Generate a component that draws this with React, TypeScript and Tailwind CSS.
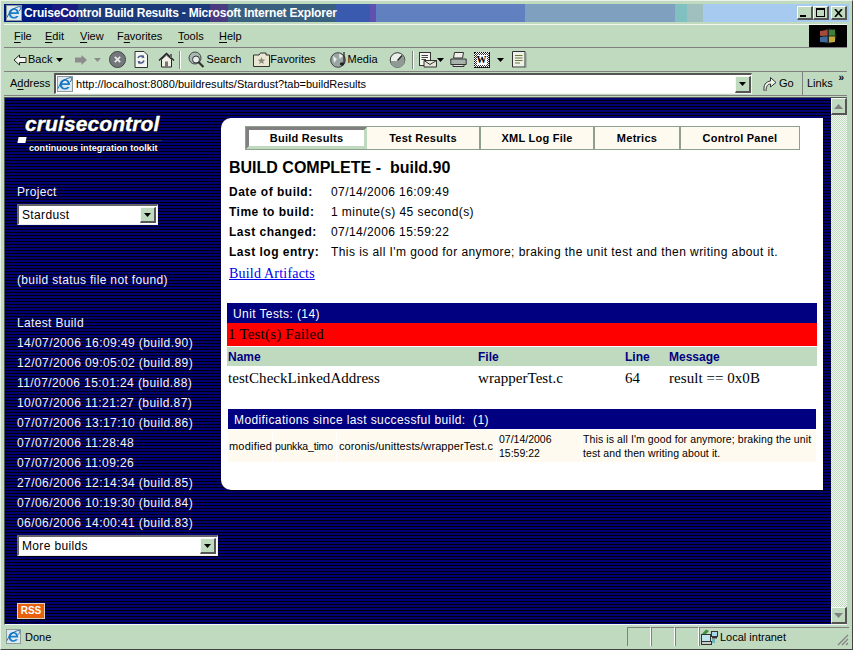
import React from "react";

const ui = "font-['Liberation_Sans',sans-serif]";

function IeLogo({ size = 16 }: { size?: number }) {
  return (
    <svg width={size} height={size} viewBox="0 0 16 16" className="shrink-0">
      <rect x="0.5" y="0.5" width="15" height="15" fill="#dfe9ef" stroke="#8a9a9a" />
      <path d="M2.5 9 H13 C13.2 5.5 11 3.2 8 3.2 C5 3.2 2.7 5.5 2.7 8.5 C2.7 11.5 5 13.6 8 13.6 C10 13.6 11.6 12.7 12.6 11 H10.2 C9.6 11.7 8.9 12 8 12 C6.4 12 5.2 10.7 5 9 Z M5.1 7.2 C5.4 5.8 6.5 4.8 8 4.8 C9.4 4.8 10.4 5.8 10.7 7.2 Z" fill="#1a7fc8" fillRule="evenodd" />
      <path d="M1 12.5 C4 5 10 1.5 14.5 1.6 C15.5 3 14 5 13 6" fill="none" stroke="#0f5d9c" strokeWidth="0.9" />
    </svg>
  );
}

function Arrow({ dir, color }: { dir: "left" | "right"; color: string }) {
  return (
    <svg width="14" height="12" viewBox="0 0 14 12" className="shrink-0">
      {dir === "left" ? (
        <path d="M1 6 L6.5 1 V3.5 H13 V8.5 H6.5 V11 Z" fill="#f4f6f0" stroke={color} />
      ) : (
        <path d="M13 6 L7.5 1 V3.5 H1 V8.5 H7.5 V11 Z" fill={color} />
      )}
    </svg>
  );
}

function Caret({ color = "#000" }: { color?: string }) {
  return (
    <svg width="7" height="4" viewBox="0 0 7 4" className="shrink-0">
      <path d="M0 0 H7 L3.5 4 Z" fill={color} />
    </svg>
  );
}

function Stop() {
  return (
    <svg width="17" height="17" viewBox="0 0 17 17" className="shrink-0">
      <circle cx="8.5" cy="8.5" r="8" fill="#74787c" stroke="#444" />
      <path d="M5.8 5.8 L11.2 11.2 M11.2 5.8 L5.8 11.2" stroke="#e8e8e8" strokeWidth="1.8" />
    </svg>
  );
}

function Refresh() {
  return (
    <svg width="14" height="17" viewBox="0 0 14 17" className="shrink-0">
      <path d="M1 .5 H10 L13.5 4 V16.5 H1 Z" fill="#f4f6f0" stroke="#333" />
      <path d="M4 7 C5 4.5 8 4.5 9.5 6 M10 9.5 C9 12.5 6 12.5 4.5 11" fill="none" stroke="#4b5b8a" strokeWidth="1.5" />
      <path d="M9 3.5 L10.5 7 L7.5 6.8 Z M5 13.5 L3.5 10 L6.5 10.2 Z" fill="#4b5b8a" />
    </svg>
  );
}

function Home() {
  return (
    <svg width="17" height="16" viewBox="0 0 17 16" className="shrink-0">
      <path d="M1 8.5 L8.5 1.5 L16 8.5" fill="none" stroke="#222" strokeWidth="1.4" />
      <path d="M3.5 7.5 V15 H13.5 V7.5 L8.5 3 Z" fill="#f2f0e6" stroke="#222" />
      <rect x="7" y="9.5" width="3" height="5.5" fill="#777" />
      <rect x="12" y="2" width="2" height="4" fill="#666" />
    </svg>
  );
}

function SearchIcon() {
  return (
    <svg width="17" height="17" viewBox="0 0 17 17" className="shrink-0">
      <circle cx="7" cy="7" r="6" fill="#a9b8b2" stroke="#444" />
      <circle cx="8" cy="8.5" r="3.5" fill="#e7efec" stroke="#333" />
      <path d="M10.5 11 L15.5 16" stroke="#333" strokeWidth="2.2" />
    </svg>
  );
}

function FavFolder() {
  return (
    <svg width="17" height="15" viewBox="0 0 17 15" className="shrink-0">
      <path d="M.5 3 H6 L7.5 1 H13 V3 H16.5 V14.5 H.5 Z" fill="#e9e6d2" stroke="#333" />
      <path d="M8.5 5 L9.5 7.6 L12.3 7.7 L10.1 9.4 L10.9 12 L8.5 10.5 L6.1 12 L6.9 9.4 L4.7 7.7 L7.5 7.6 Z" fill="#8a8a7a" />
    </svg>
  );
}

function MediaIcon() {
  return (
    <svg width="17" height="18" viewBox="0 0 17 18" className="shrink-0">
      <circle cx="8" cy="9" r="7.3" fill="#9aa6a2" stroke="#444" />
      <path d="M3 5 L7 8 L4 12 Z M9 2.5 L13 5 L9.5 8 Z" fill="#e8eeea" />
      <path d="M14 1 V12.5" stroke="#222" strokeWidth="1.2" />
      <ellipse cx="12" cy="13" rx="2.2" ry="1.7" fill="#222" />
    </svg>
  );
}

function History() {
  return (
    <svg width="17" height="16" viewBox="0 0 17 16" className="shrink-0">
      <circle cx="8.5" cy="8" r="7.3" fill="#e9efe9" stroke="#333" />
      <path d="M1.5 9 H8.5 L13 3.5 A7.3 7.3 0 0 1 15 12 A7.3 7.3 0 0 1 1.5 9 Z" fill="#8f9a94" />
      <path d="M8.5 8.5 L13 3.5" stroke="#222" strokeWidth="1.3" />
    </svg>
  );
}

function MailIcon() {
  return (
    <svg width="19" height="16" viewBox="0 0 19 16" className="shrink-0">
      <rect x="0.5" y="0.5" width="11" height="13" fill="#f4f6f0" stroke="#333" />
      <path d="M2.5 3.5 H9 M2.5 5.5 H9 M2.5 7.5 H7" stroke="#444" />
      <path d="M5 8.5 H17.5 V15 H5 Z" fill="#e6e6d8" stroke="#333" />
      <path d="M5 8.5 L11 12.5 L17.5 8.5" fill="none" stroke="#333" />
    </svg>
  );
}

function Printer() {
  return (
    <svg width="17" height="15" viewBox="0 0 17 15" className="shrink-0">
      <path d="M4.5 .5 H13.5 L12.5 6 H3.5 Z" fill="#f1f1ea" stroke="#333" />
      <path d="M.8 7 H16.2 V12.5 H.8 Z" fill="#a9b3ae" stroke="#333" />
      <path d="M3 12.5 H14 V14.5 H3 Z" fill="#ddd" stroke="#333" />
    </svg>
  );
}

function WordIcon() {
  return (
    <span className="flex h-[16px] w-[16px] shrink-0 items-center justify-center border border-dotted border-black bg-[repeating-conic-gradient(#333_0_25%,#fff_0_50%)] bg-[length:2px_2px]">
      <span className="flex h-[10px] w-[10px] items-center justify-center bg-white font-['Liberation_Serif',serif] text-[10px] leading-none font-bold text-black">W</span>
    </span>
  );
}

function Note() {
  return (
    <svg width="15" height="17" viewBox="0 0 15 17" className="shrink-0">
      <path d="M.5 .5 H13 V16 H.5 Z" fill="#eef1e8" stroke="#333" />
      <path d="M14 2 V16.7 H2" fill="none" stroke="#8a9a8a" />
      <path d="M3 4.5 H10.5 M3 7 H10.5 M3 9.5 H10.5 M3 12 H8" stroke="#6a7a3a" />
    </svg>
  );
}

function GoIcon() {
  return (
    <svg width="14" height="16" viewBox="0 0 14 16" className="shrink-0">
      <path d="M1.2 15 C0 9 3 5.5 7.5 5 V1.5 L13 6.5 L7.5 11 V8 C5 8 3 10 3 15" fill="#eef1e8" stroke="#333" />
    </svg>
  );
}

function IntranetIcon() {
  return (
    <svg width="17" height="16" viewBox="0 0 17 16" className="shrink-0">
      <path d="M1 5 L5 0.5 L8 2 L4 6 Z" fill="#3f8f3f" />
      <rect x="0.5" y="5.5" width="9" height="7" fill="#bfe6ef" stroke="#333" />
      <rect x="0.5" y="12.5" width="10" height="3" fill="#c8ccc8" stroke="#333" />
      <rect x="10.5" y="2.5" width="6" height="5" fill="#a8d8e8" stroke="#333" />
      <rect x="11" y="8" width="5" height="1.5" fill="#333" />
      <path d="M11 11 H14 M11 13 H14" stroke="#1c8fb0" />
    </svg>
  );
}

function WinFlag() {
  return (
    <svg width="18" height="16" viewBox="0 0 18 16">
      <circle cx="10" cy="8" r="7.5" fill="#202a20" />
      <path d="M1 3 L8.5 2 V7.5 L1 8 Z" fill="#a64a3c" />
      <path d="M10 2 L16 1.5 V7.5 L10 7.5 Z" fill="#3f7f3c" />
      <path d="M1 9 L8.5 8.5 V14.5 L1 14 Z" fill="#41689a" />
      <path d="M10 8.5 L16 8.5 V14 L10 14.5 Z" fill="#c8a93c" />
    </svg>
  );
}

function ScrollBtn({ up }: { up?: boolean }) {
  return (
    <div className="flex h-[17px] w-[16px] shrink-0 items-center justify-center border-t border-r-2 border-b-2 border-l border-t-[#f4f8f4] border-r-[#555] border-b-[#555] border-l-[#f4f8f4] bg-[#c0dac0]">
      <svg width="9" height="5" viewBox="0 0 9 5">
        <path d={up ? "M0 5 H9 L4.5 0 Z" : "M0 0 H9 L4.5 5 Z"} fill="#808080" />
      </svg>
    </div>
  );
}

function Select({ label, className }: { label: string; className: string }) {
  return (
    <div className={`${className} flex h-[21px] items-center border-t-2 border-r border-b border-l-2 border-t-[#666] border-r-[#e8f0e8] border-b-[#e8f0e8] border-l-[#666] bg-white pl-[3px] text-[12px] tracking-[0.35px] text-black`}>
      <span className="flex-1">{label}</span>
      <span className="mr-px flex h-[16px] w-[16px] items-center justify-center border-t border-r-2 border-b-2 border-l border-t-[#f4f8f4] border-r-[#555] border-b-[#555] border-l-[#f4f8f4] bg-[#c0dac0]">
        <Caret />
      </span>
    </div>
  );
}

function Tab({ label, w, active }: { label: string; w: string; active?: boolean }) {
  return (
    <div
      className={
        active
          ? `${w} flex items-center justify-center border-t-[3px] border-r-[3px] border-b-[3px] border-l-[3px] border-t-[#808080] border-r-[#c0dac0] border-b-[#c0dac0] border-l-[#808080] bg-white`
          : `${w} flex items-center justify-center border-r-2 border-r-[#8fa08f] bg-[#fffaf0]`
      }
    >
      {label}
    </div>
  );
}

const builds = [
  "14/07/2006 16:09:49 (build.90)",
  "12/07/2006 09:05:02 (build.89)",
  "11/07/2006 15:01:24 (build.88)",
  "10/07/2006 11:21:27 (build.87)",
  "07/07/2006 13:17:10 (build.86)",
  "07/07/2006 11:28:48",
  "07/07/2006 11:09:26",
  "27/06/2006 12:14:34 (build.85)",
  "07/06/2006 10:19:30 (build.84)",
  "06/06/2006 14:00:41 (build.83)",
];

const info = [
  ["Date of build:", "07/14/2006 16:09:49"],
  ["Time to build:", "1 minute(s) 45 second(s)"],
  ["Last changed:", "07/14/2006 15:59:22"],
  ["Last log entry:", "This is all I'm good for anymore; braking the unit test and then writing about it."],
];

function U({ k, rest, pre = "" }: { k: string; rest: string; pre?: string }) {
  return (
    <span>
      {pre}
      <span className="underline underline-offset-2">{k}</span>
      {rest}
    </span>
  );
}

export default function App() {
  return (
    <div className={`${ui} flex h-[650px] w-[853px] flex-col overflow-hidden border-t border-r border-b border-l border-t-[#e8f2e8] border-r-[#444] border-b-[#444] border-l-[#e8f2e8] bg-[#c0dac0] pt-[3px] pr-[3px] pb-[3px] pl-[3px] text-black`}>
      {/* Title bar */}
      <div className="flex h-[18px] shrink-0 items-center bg-[linear-gradient(90deg,#001a80_0,#001a80_48px,#1a1a80_48px,#1a1a80_74px,#1a3a7a_74px,#1a3a7a_206px,#4a3a80_206px,#4a3a80_224px,#3a6080_224px,#3a6080_331px,#3a5ab0_331px,#3a5ab0_366px,#6050b0_366px,#6050b0_372px,#6080c0_372px,#6080c0_521px,#80a0c0_521px,#80a0c0_671px,#80c0c0_671px,#80c0c0_683px,#a0c0c0_683px,#a0c0c0_699px,#a6caf0_699px)] pr-[2px] pl-[2px]">
        <IeLogo size={16} />
        <span className="ml-[2px] flex-1 text-[12px] font-bold tracking-[-0.2px] whitespace-nowrap text-white">CruiseControl Build Results - Microsoft Internet Explorer</span>
        {["min", "max", "close"].map((k) => (
          <span key={k} className={`${k === "close" ? "ml-[2px]" : ""} flex h-[14px] w-[16px] items-center justify-center border-t border-r-2 border-b-2 border-l border-t-white border-r-[#555] border-b-[#555] border-l-white bg-[#c0dac0]`}>
            {k === "min" && <span className="mt-[7px] mr-[3px] h-[2px] w-[6px] bg-black" />}
            {k === "max" && <span className="h-[9px] w-[9px] border border-t-2 border-black" />}
            {k === "close" && (
              <svg width="9" height="8" viewBox="0 0 9 8">
                <path d="M1 0 L8 8 M8 0 L1 8" stroke="#000" strokeWidth="1.6" />
              </svg>
            )}
          </span>
        ))}
      </div>

      {/* Menu */}
      <div className="mt-[2px] mr-[2px] flex h-[24px] shrink-0 items-stretch border-t border-b border-t-[#f0f6f0] border-b-[#808080] text-[11px]">
        <div className="flex flex-1 items-center pl-[10px]">
          <span className="w-[31px]"><U k="F" rest="ile" /></span>
          <span className="w-[35px]"><U k="E" rest="dit" /></span>
          <span className="w-[37px]"><U k="V" rest="iew" /></span>
          <span className="w-[61px]"><U pre="F" k="a" rest="vorites" /></span>
          <span className="w-[41px]"><U k="T" rest="ools" /></span>
          <span><U k="H" rest="elp" /></span>
        </div>
        <div className="flex w-[38px] items-center justify-center bg-black">
          <WinFlag />
        </div>
      </div>

      {/* Toolbar */}
      <div className="mr-[2px] flex h-[24px] shrink-0 items-center border-b border-b-[#808080] pl-[9px] text-[11px] [&>span]:flex">
        <Arrow dir="left" color="#222" />
        <span className="ml-[1px]">Back</span>
        <span className="ml-[4px]"><Caret /></span>
        <span className="ml-[11px]"><Arrow dir="right" color="#8c8c8c" /></span>
        <span className="ml-[6px]"><Caret color="#8c8c8c" /></span>
        <span className="ml-[8px]"><Stop /></span>
        <span className="ml-[8px]"><Refresh /></span>
        <span className="ml-[10px]"><Home /></span>
        <span className="ml-[4px] h-[18px] w-[2px] border-r border-l border-r-white border-l-[#808080]" />
        <span className="ml-[7px]"><SearchIcon /></span>
        <span className="ml-[1px]">Search</span>
        <span className="ml-[12px]"><FavFolder /></span>
        <span>Favorites</span>
        <span className="ml-[14px]"><MediaIcon /></span>
        <span className="ml-[1px]">Media</span>
        <span className="ml-[11px]"><History /></span>
        <span className="ml-[6px] h-[18px] w-[2px] border-r border-l border-r-white border-l-[#808080]" />
        <span className="ml-[5px]"><MailIcon /></span>
        <span className="-ml-[1px]"><Caret /></span>
        <span className="ml-[6px]"><Printer /></span>
        <span className="ml-[7px]"><WordIcon /></span>
        <span className="ml-[7px]"><Caret /></span>
        <span className="ml-[8px]"><Note /></span>
      </div>

      {/* Address bar */}
      <div className="mr-[2px] flex h-[24px] shrink-0 items-stretch border-b border-b-[#808080] text-[11px]">
        <span className="flex w-[50px] items-center pl-[6px]"><U pre="A" k="d" rest="dress" /></span>
        <div className="my-[1px] flex w-[698px] items-center border-t-2 border-r border-b border-l-2 border-t-[#555] border-r-[#eef4ee] border-b-[#eef4ee] border-l-[#555] bg-white pl-[1px] text-[11px]">
          <IeLogo size={16} />
          <span className="ml-[3px] flex-1 tracking-[0.02px] whitespace-nowrap">http://localhost:8080/buildresults/Stardust?tab=buildResults</span>
          <span className="flex h-[17px] w-[16px] items-center justify-center border-t border-r-2 border-b-2 border-l border-t-[#f4f8f4] border-r-[#555] border-b-[#555] border-l-[#f4f8f4] bg-[#c0dac0]">
            <Caret />
          </span>
        </div>
        <div className="flex w-[51px] items-center gap-[2px] border-r border-r-[#808080] pl-[11px]">
          <GoIcon />
          <span>Go</span>
        </div>
        <div className="relative flex flex-1 items-center pl-[4px]">
          Links
          <span className="absolute top-[1px] right-[3px] text-[10px] leading-none font-bold">»</span>
        </div>
      </div>

      {/* Page */}
      <div className="mt-[1px] mr-[2px] flex min-h-0 flex-1 border-t border-b border-l border-t-[#555] border-b-[#f4f8f4] border-l-[#555]">
        <div className="flex min-w-0 flex-1 bg-[repeating-linear-gradient(180deg,#000070_0,#000070_2px,#000008_2px,#000008_3px)]">
          {/* Sidebar */}
          <div className="flex w-[216px] shrink-0 flex-col pl-[12px] text-[12px] tracking-[0.35px] text-[#f4f4ff]">
            <div className="mt-[15px] ml-[1px] flex h-[42px] w-[144px] flex-col">
              <span className="-mt-px mb-px pl-[7px] text-[21px] leading-[24px] font-bold tracking-[0.1px] text-white italic [-webkit-text-stroke:0.4px_white] [text-shadow:1px_1px_0_#000,-1px_-1px_0_#000]">cruisecontrol</span>
              <div className="flex items-center">
                <span className="h-[6px] w-[8px] -skew-x-12 bg-white" />
                <span className="h-px flex-1 bg-[#333]" />
              </div>
              <span className="pl-[11px] text-[9px] leading-[11px] font-bold tracking-[0.05px] whitespace-nowrap text-white [text-shadow:0_0_2px_#000]">continuous integration toolkit</span>
            </div>
            <span className="mt-[30px] leading-[14px]">Project</span>
            <Select label="Stardust" className="mt-[5px] w-[141px]" />
            <span className="mt-[48px] leading-[14px]">(build status file not found)</span>
            <span className="mt-[29px] leading-[14px]">Latest Build</span>
            <div className="mt-[3px] flex flex-col tracking-[0.42px]">
              {builds.map((b) => (
                <span key={b} className="h-[20px] leading-[20px] whitespace-nowrap">{b}</span>
              ))}
            </div>
            <Select label="More builds" className="mt-[2px] w-[201px]" />
            <span className="mt-[47px] flex h-[16px] w-[28px] items-center justify-center border border-[#d8d0c0] bg-[#e8600c] text-[10px] leading-none font-bold tracking-normal text-white">RSS</span>
          </div>

          {/* Card */}
          <div className="mt-[20px] mr-[8px] mb-auto flex h-[372px] w-[602px] shrink-0 flex-col rounded-l-[10px] bg-white">
            <div className="mt-[8px] ml-[24px] flex h-[24px] w-[555px] border border-[#8fa08f] text-[11px] leading-none font-bold tracking-[0.25px]">
              <Tab label="Build Results" w="w-[121px]" active />
              <Tab label="Test Results" w="w-[114px]" />
              <Tab label="XML Log File" w="w-[114px]" />
              <Tab label="Metrics" w="w-[86px]" />
              <div className="flex flex-1 items-center justify-center bg-[#fffaf0]">Control Panel</div>
            </div>
            <div className="mt-[8px] pl-[8px] text-[16px] leading-[20px] font-semibold whitespace-pre">BUILD COMPLETE -  build.90</div>
            <div className="mt-[4px] flex flex-col pl-[8px] text-[12px] tracking-[0.5px]">
              {info.map(([k, v]) => (
                <div key={k} className="flex h-[20px] items-center whitespace-nowrap">
                  <span className="w-[102px] font-bold">{k}</span>
                  <span className="tracking-[0.43px]">{v}</span>
                </div>
              ))}
            </div>
            <a href="#" className="mt-[3px] ml-[8px] w-fit font-['Liberation_Serif',serif] text-[14px] leading-[18px] tracking-[0.2px] text-[#0000ee] underline">Build Artifacts</a>

            <div className="mt-[20px] ml-[6px] flex w-[590px] flex-col">
              <div className="flex h-[20px] items-center bg-[#000080] pt-px pl-[6px] text-[12px] tracking-[0.4px] text-white">Unit Tests: (14)</div>
              <div className="flex h-[23px] items-center bg-[#ff0000] pl-[1px] font-['Liberation_Serif',serif] text-[15px] tracking-[0.2px] text-black">1 Test(s) Failed</div>
              <div className="mt-px flex h-[19px] items-center bg-[#c0dac0] pl-px text-[12px] font-bold text-[#000080]">
                <span className="w-[250px]">Name</span>
                <span className="w-[147px]">File</span>
                <span className="w-[44px]">Line</span>
                <span>Message</span>
              </div>
              <div className="flex h-[24px] items-center pl-px font-['Liberation_Serif',serif] text-[15px] tracking-[0.05px]">
                <span className="w-[250px]">testCheckLinkedAddress</span>
                <span className="w-[147px]">wrapperTest.c</span>
                <span className="w-[44px]">64</span>
                <span>result == 0x0B</span>
              </div>
            </div>

            <div className="mt-[19px] ml-[7px] flex w-[588px] flex-col">
              <div className="flex h-[20px] items-center bg-[#000080] pt-px pl-[6px] text-[12px] tracking-[0.4px] whitespace-pre text-white">Modifications since last successful build:  (1)</div>
              <div className="mt-px flex h-[32px] gap-px text-[10.5px] leading-[14px]">
                <span className="flex w-[44px] items-center bg-[#fffaf0] pl-[1px] text-[11px] tracking-[0.2px]">modified</span>
                <span className="flex w-[63px] items-center bg-[#fffaf0] pl-[2px] tracking-[-0.15px]">punkka_timo</span>
                <span className="flex w-[159px] items-center bg-[#fffaf0] pl-[2px] text-[11px] tracking-[0.1px] whitespace-nowrap">coronis/unittests/wrapperTest.c</span>
                <span className="flex w-[84px] items-center bg-[#fffaf0] pl-[2px]">07/14/2006<br />15:59:22</span>
                <span className="flex flex-1 items-center bg-[#fffaf0] pl-[1px] tracking-[0.1px]">This is all I'm good for anymore; braking the unit test and then writing about it.</span>
              </div>
            </div>
          </div>
        </div>

        {/* Scrollbar */}
        <div className="flex w-[16px] shrink-0 flex-col bg-[repeating-conic-gradient(#c0dac0_0_25%,#f4f8f4_0_50%)] bg-[length:2px_2px]">
          <ScrollBtn up />
          <div className="flex-1" />
          <ScrollBtn />
        </div>
      </div>

      {/* Status bar */}
      <div className="mt-[2px] flex h-[19px] shrink-0 items-stretch text-[11px]">
        <div className="flex flex-1 items-center gap-[4px] pl-[2px]">
          <IeLogo size={15} />
          <span className="pt-px">Done</span>
        </div>
        {["w-[24px]", "w-[24px]", "w-[24px]"].map((w, i) => (
          <span key={i} className={`${w} border-t border-r border-l border-t-[#808080] border-r-white border-l-[#808080]`} />
        ))}
        <div className="relative flex w-[150px] items-center border-t border-l border-t-[#808080] border-l-[#808080] pl-[1px]">
          <IntranetIcon />
          <span className="ml-[2px] pt-px">Local intranet</span>
          <svg width="12" height="12" viewBox="0 0 12 12" className="absolute right-0 bottom-0">
            <path d="M11 1 L1 11 M11 5 L5 11 M11 9 L9 11" stroke="#808080" strokeWidth="1.2" />
          </svg>
        </div>
      </div>
    </div>
  );
}
